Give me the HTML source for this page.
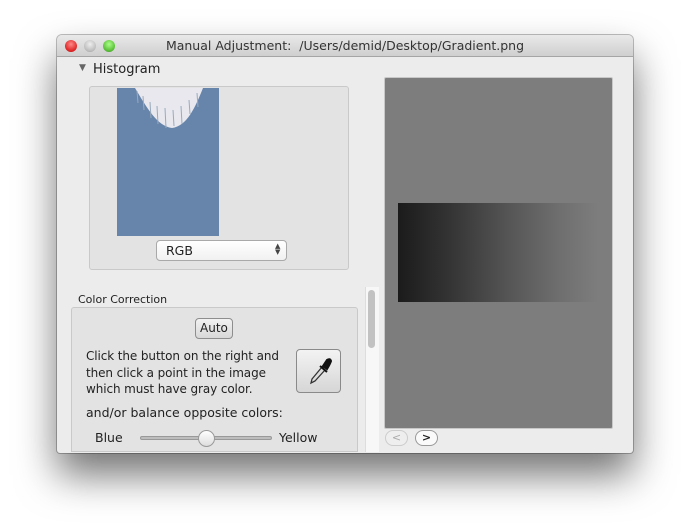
<!DOCTYPE html>
<html><head><style>
*{margin:0;padding:0;box-sizing:border-box}
body{width:690px;height:531px;background:#fff;position:relative;overflow:hidden;font-family:"Lucida Grande","DejaVu Sans","Liberation Sans",sans-serif;color:#222}
.win{position:absolute;left:57px;top:35px;width:576px;height:418px;background:#ececec;border-radius:5px 5px 3px 3px;box-shadow:0 22px 40px rgba(0,0,0,.55),0 0 0 1px rgba(0,0,0,.25);overflow:hidden}
.tb{height:22px;background:linear-gradient(#e9e9e9,#cfcfcf);border-bottom:1px solid #a5a5a5;text-align:center;font-size:12.5px;line-height:22px;color:#333}
.dot{position:absolute;top:5px;width:12px;height:12px;border-radius:50%}
.a{position:absolute}
.t{position:absolute;font-size:12px;white-space:nowrap}
</style></head><body>
<div class="win">
<div class="tb">Manual Adjustment:&nbsp; /Users/demid/Desktop/Gradient.png</div>
<div class="dot" style="left:8px;background:radial-gradient(circle at 50% 35%,#f88,#d22 70%,#911);"></div>
<div class="dot" style="left:27px;background:radial-gradient(circle at 50% 35%,#eee,#bbb 70%,#888);"></div>
<div class="dot" style="left:46px;background:radial-gradient(circle at 50% 35%,#af8,#5b3 70%,#363);"></div>
</div>
<div class="t" style="left:79px;top:63px;font-size:9px;color:#666">▼</div>
<div class="t" style="left:93px;top:62px;font-size:13px">Histogram</div>
<div class="a" style="left:89px;top:86px;width:260px;height:184px;background:#e3e3e3;border:1px solid #c9c9c9;border-radius:3px"></div>
<svg class="a" style="left:117px;top:88px" width="102" height="148"><path d="M0 0H102V148H0Z" fill="#6784ab"/><path d="M18 0 C30 20 40 38 55 40 C70 38 78 20 86 0Z" fill="#e8e8ee"/><path d="M20 3l1 12M26 8l1 14M33 14l1 16M40 18l1 18M48 20l1 20M56 22l1 16M64 18l1 18M72 12l1 14M80 5l1 14" stroke="#9ab" stroke-width="1"/></svg>
<div class="a" style="left:156px;top:240px;width:131px;height:21px;background:linear-gradient(#fff,#f1f1f1);border:1px solid #a9a9a9;border-radius:4px"></div>
<div class="t" style="left:166px;top:243px;font-size:12.5px">RGB</div>
<div class="t" style="left:275px;top:243px;font-size:7px;line-height:6px;color:#444">▲<br>▼</div>
<div class="t" style="left:78px;top:293px;font-size:11px">Color Correction</div>
<div class="a" style="left:71px;top:307px;width:287px;height:145px;background:#e3e3e3;border:1px solid #c9c9c9;border-radius:3px 3px 0 0"></div>
<div class="a" style="left:195px;top:318px;width:38px;height:21px;background:linear-gradient(#f2f2f2,#d8d8d8);border:1px solid #8e8e8e;border-radius:4px"></div>
<div class="t" style="left:200px;top:321px;font-size:12px">Auto</div>
<div class="t" style="left:86px;top:348px;font-size:12px;line-height:16.5px;letter-spacing:-0.1px">Click the button on the right and<br>then click a point in the image<br>which must have gray color.</div>
<div class="a" style="left:296px;top:349px;width:45px;height:44px;background:linear-gradient(#f3f3f3,#d6d6d6);border:1px solid #8a8a8a;border-radius:4px"></div>
<svg class="a" style="left:306px;top:356px" width="26" height="30"><path d="M16 11 L6 23 L5 27 L9 25 L19 14" fill="#ddd" stroke="#333" stroke-width="1.3"/><path d="M14 10 L21 16 M17 10 L21 4 Q24 2 25 5 Q24 8 21 13Z" fill="#111" stroke="#111" stroke-width="2"/></svg>
<div class="t" style="left:86px;top:405px;font-size:12.5px">and/or balance opposite colors:</div>
<div class="t" style="left:95px;top:430px;font-size:12.5px">Blue</div>
<div class="t" style="left:279px;top:430px;font-size:12.5px">Yellow</div>
<div class="a" style="left:140px;top:436px;width:132px;height:4px;background:#bdbdbd;border:1px solid #999;border-radius:2px"></div>
<div class="a" style="left:198px;top:430px;width:17px;height:17px;border-radius:50%;background:linear-gradient(#fff,#ddd);border:1px solid #999"></div>
<div class="a" style="left:365px;top:287px;width:14px;height:165px;background:#f7f7f7;border-left:1px solid #ddd"></div>
<div class="a" style="left:368px;top:290px;width:7px;height:58px;background:#c2c2c2;border-radius:4px"></div>
<div class="a" style="left:384px;top:77px;width:229px;height:352px;border:1px solid #c8c8c8;border-radius:2px;background:#7d7d7d"></div>
<div class="a" style="left:398px;top:203px;width:200px;height:99px;background:linear-gradient(90deg,#1b1b1b,#333 25%,#555 55%,#6e6e6e 80%,#7d7d7d)"></div>
<div class="a" style="left:385px;top:430px;width:23px;height:16px;border:1px solid #ccc;border-radius:8px;background:#eee;font-size:11px;text-align:center;line-height:14px;color:#aaa">&lt;</div>
<div class="a" style="left:415px;top:430px;width:23px;height:16px;border:1px solid #999;border-radius:8px;background:#fafafa;font-size:11px;text-align:center;line-height:14px;color:#222;font-weight:bold">&gt;</div>
</body></html>
